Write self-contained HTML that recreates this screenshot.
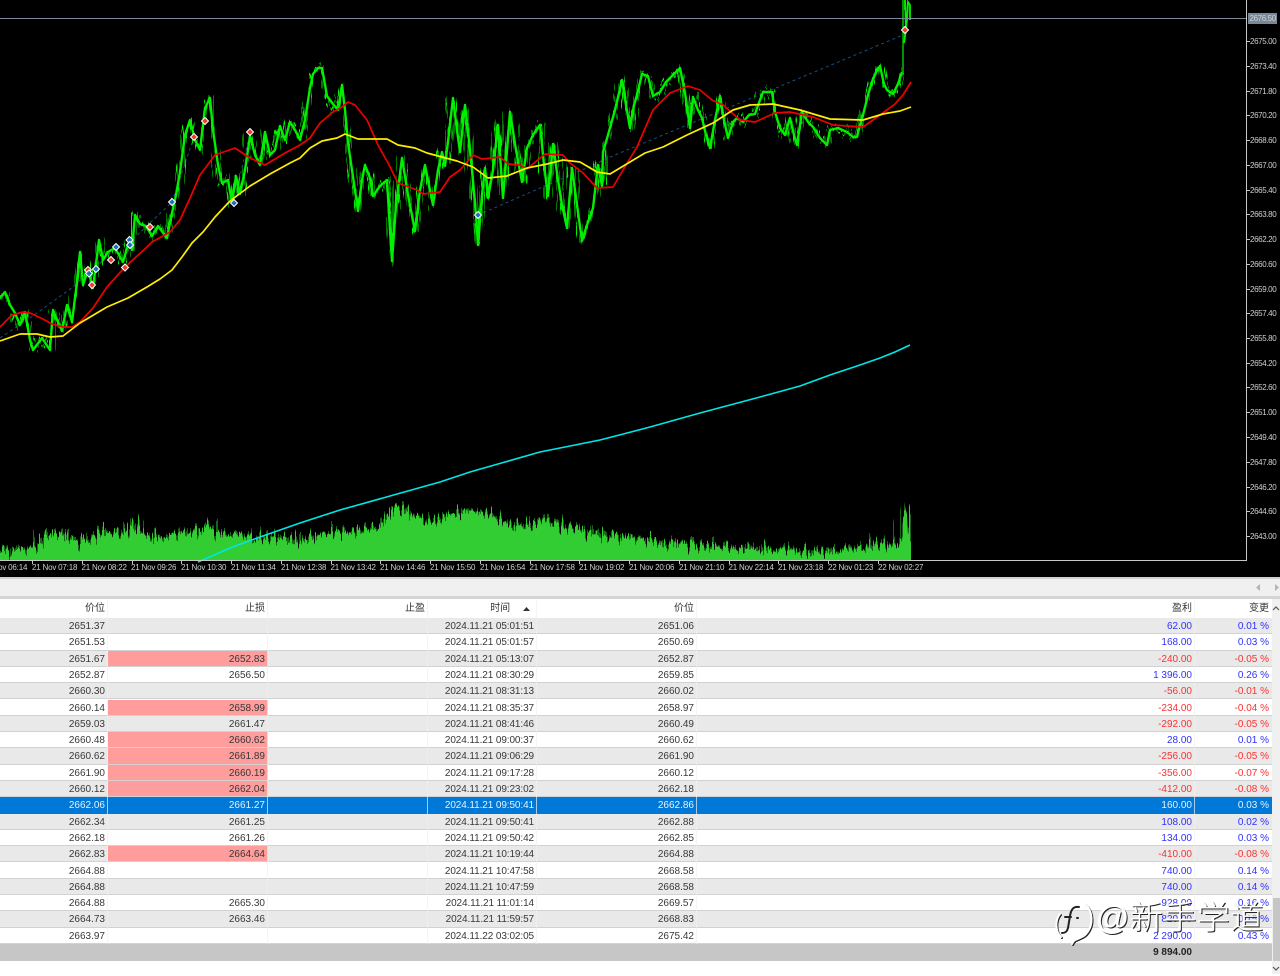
<!DOCTYPE html>
<html lang="zh">
<head>
<meta charset="utf-8">
<title>Chart</title>
<style>
html,body{margin:0;padding:0;background:#fff}
body{width:1280px;height:974px;position:relative;overflow:hidden;font-family:"Liberation Sans","Noto Sans CJK SC",sans-serif}
#chart{position:absolute;left:0;top:0;display:block}
#chart text{font-family:"Liberation Sans",sans-serif;font-size:8px;fill:#cfcfcf;letter-spacing:-.2px}
#chart .y{letter-spacing:-.38px}
#bar{position:absolute;left:0;top:577px;width:1280px;height:22px;box-sizing:border-box;background:#f0f0f0;border-top:2px solid #cfcfcf;border-bottom:3px solid #d4d4d4}
#head{position:absolute;left:0;top:599px;width:1272px;height:19px;background:#fff}
.r{position:absolute;left:0;width:1272px;height:16.3px;display:grid;grid-template-columns:108px 160px 160px 109px 160px 498px 77px;grid-template-rows:15.3px;font-size:10px;line-height:18px;color:#383838;box-sizing:border-box;border-bottom:1px solid #d2d2d2;background:#fff;white-space:pre}
.r i{font-style:normal;text-align:right;padding-right:3px;display:block;overflow:hidden}
.r i:nth-child(4){letter-spacing:-.1px}
.g{background:#e9e9e9}
.s{background:#0078d7;color:#e8f2fb;border-bottom-color:#0078d7}
.s i.b,.s i.n{color:#e8f2fb}
.p{background:#ff9c9c}
.b{color:#3030ff}
.n{color:#ff3030}
#head .r{top:0;background:#fff;border:0;line-height:20px;font-size:10px;color:#333;grid-template-rows:19px}
.v{position:absolute;top:599px;height:345px;width:1px;background:rgba(240,240,240,.7)}
#tot{position:absolute;left:0;top:944px;width:1272px;height:17px;background:#c6c6c6;font-size:10px;line-height:17px;font-weight:bold;color:#222;text-align:right;box-sizing:border-box;padding-right:80px}
#sb{position:absolute;left:1272px;top:599px;width:8px;height:375px;background:#f0f0f0}
#th{position:absolute;left:1px;top:299px;width:7px;height:63px;background:#c6c6c6}
#wm{position:absolute;left:1096px;top:896px;font-size:33px;line-height:44px;color:#fff;white-space:nowrap;font-weight:300;text-shadow:1px 1px 0 #222,-1px 0 1px rgba(255,255,255,.8);letter-spacing:.5px;font-family:"Liberation Sans","Noto Sans CJK SC",sans-serif}
#fi{position:absolute;left:1052px;top:900px}
</style>
</head>
<body>
<svg id="chart" width="1280" height="577" viewBox="0 0 1280 577">
<defs>
<filter id="jit" filterUnits="userSpaceOnUse" x="-10" y="-30" width="1000" height="640" color-interpolation-filters="sRGB">
<feTurbulence type="fractalNoise" baseFrequency="0.5 0.004" numOctaves="2" seed="7" result="t"/>
<feDisplacementMap in="SourceGraphic" in2="t" scale="22" xChannelSelector="A" yChannelSelector="G"/>
</filter>
<filter id="vjit" filterUnits="userSpaceOnUse" x="-10" y="480" width="1000" height="100" color-interpolation-filters="sRGB">
<feTurbulence type="fractalNoise" baseFrequency="0.42 0.002" numOctaves="3" seed="3" result="t"/>
<feDisplacementMap in="SourceGraphic" in2="t" scale="36" xChannelSelector="A" yChannelSelector="G"/>
</filter>
<clipPath id="cv"><rect x="0" y="480" width="911" height="80"/></clipPath>
<clipPath id="cp"><rect x="0" y="0" width="911" height="560"/></clipPath>
</defs>
<rect width="1280" height="577" fill="#000"/>

<!-- volume -->
<g clip-path="url(#cv)">
<polygon filter="url(#vjit)" fill="#32cd32" points="-5,590 -5,552 10,550 25,549 40,544 42,532 50,535 60,530 70,538 85,542 100,530 115,532 125,533 133,518 140,532 160,538 180,534 200,530 207,522 215,532 240,534 260,538 280,536 300,540 320,534 340,532 360,530 380,528 388,515 393,505 400,508 410,512 420,518 432,522 445,516 465,510 480,512 495,516 510,524 525,526 545,518 560,526 580,528 600,534 620,536 640,538 660,542 680,542 700,545 720,545 740,547 760,548 780,550 800,552 820,551 840,549 860,547 880,543 895,544 901,540 904,510 906,510 909,530 911,544 911,590"/>
<polygon fill="#32cd32" points="901,560 903,535 905,507 907,514 908,535 911,542 911,560"/>
</g>

<!-- cyan -->
<polyline fill="none" stroke="#00e6e6" stroke-width="1.600" points="198,562 230,548 260,537 300,523 340,510 390,496 440,482 470,472 505,462 540,452 570,446 600,440 650,427 700,413 760,397 800,386 830,375 860,365 880,358 895,352 910,345"/>

<!-- dotted trade links -->
<g fill="none" stroke="#1b4f80" stroke-width="1" stroke-dasharray="3 3">
<polyline points="0,338 30,318 73,287 88,272"/>
<polyline points="96,268 116,247 130,242 172,202 194,137"/>
<polyline points="234,203 250,133"/>
<polyline points="478,215 598,163 603,160 843,60 903,35"/>
</g>

<!-- price -->
<g clip-path="url(#cp)">
<polyline fill="none" stroke="#00f000" stroke-width="2.400" stroke-linejoin="round" points="-2,300 5,292 10,305 15,313 20,325 25,312 30,340 33,350 42,338 50,350 53,310 58,322 62,331 67,305 72,322 76,290 80,252 83,285 88,270 93,288 99,240 103,260 108,252 115,248 123,262 130,238 132,250 135,215 140,224 146,226 152,236 158,226 167,238 170,222 176,195 180,172 185,135 190,120 195,140 200,150 205,108 210,98 213,130 218,165 222,183 228,180 232,203 236,176 240,194 245,170 250,136 255,155 260,165 265,132 270,155 275,150 280,126 285,140 290,122 295,130 300,140 305,120 310,88 313,74 318,68 322,68 327,96 333,104 338,110 342,85 345,110 348,143 352,170 358,211 362,180 365,165 370,178 373,196 380,186 387,180 390,230 392,261 396,205 402,158 408,195 415,231 420,190 425,165 430,190 433,205 438,170 442,152 445,166 450,125 453,98 457,130 460,152 465,105 469,140 472,170 476,215 478,245 482,195 485,168 488,198 493,170 498,125 503,198 507,150 510,112 516,150 522,182 527,148 533,135 540,125 544,165 548,196 553,144 558,180 562,205 567,228 572,168 577,205 582,241 587,225 593,208 598,165 602,186 603,152 608,135 615,110 622,80 626,105 630,128 634,105 637,95 642,74 648,76 653,96 660,92 666,82 672,76 680,68 685,93 690,128 693,97 698,110 702,118 706,135 710,148 715,120 720,96 724,120 728,138 733,122 737,118 743,122 749,115 755,114 760,100 763,92 772,92 775,112 780,128 785,135 790,118 794,135 797,145 802,112 808,122 813,127 820,138 827,145 830,130 838,128 847,132 853,137 857,137 860,125 863,115 868,95 872,82 876,72 880,66 884,84 887,90 893,94 898,84 902,72"/>
<polyline filter="url(#jit)" fill="none" stroke="#00f000" stroke-width="1.500" stroke-linejoin="round" points="-2,300 5,292 10,305 15,313 20,325 25,312 30,340 33,350 42,338 50,350 53,310 58,322 62,331 67,305 72,322 76,290 80,252 83,285 88,270 93,288 99,240 103,260 108,252 115,248 123,262 130,238 132,250 135,215 140,224 146,226 152,236 158,226 167,238 170,222 176,195 180,172 185,135 190,120 195,140 200,150 205,108 210,98 213,130 218,165 222,183 228,180 232,203 236,176 240,194 245,170 250,136 255,155 260,165 265,132 270,155 275,150 280,126 285,140 290,122 295,130 300,140 305,120 310,88 313,74 318,68 322,68 327,96 333,104 338,110 342,85 345,110 348,143 352,170 358,211 362,180 365,165 370,178 373,196 380,186 387,180 390,230 392,261 396,205 402,158 408,195 415,231 420,190 425,165 430,190 433,205 438,170 442,152 445,166 450,125 453,98 457,130 460,152 465,105 469,140 472,170 476,215 478,245 482,195 485,168 488,198 493,170 498,125 503,198 507,150 510,112 516,150 522,182 527,148 533,135 540,125 544,165 548,196 553,144 558,180 562,205 567,228 572,168 577,205 582,241 587,225 593,208 598,165 602,186 603,152 608,135 615,110 622,80 626,105 630,128 634,105 637,95 642,74 648,76 653,96 660,92 666,82 672,76 680,68 685,93 690,128 693,97 698,110 702,118 706,135 710,148 715,120 720,96 724,120 728,138 733,122 737,118 743,122 749,115 755,114 760,100 763,92 772,92 775,112 780,128 785,135 790,118 794,135 797,145 802,112 808,122 813,127 820,138 827,145 830,130 838,128 847,132 853,137 857,137 860,125 863,115 868,95 872,82 876,72 880,66 884,84 887,90 893,94 898,84 902,72"/>
</g>
<polyline fill="none" stroke="#00b800" stroke-width="1.600" points="903,75 903,0"/>
<polyline fill="none" stroke="#00f000" stroke-width="1.800" points="905,10 905,-5 906,30 904,43 907,20 908,2 910,5 910,20"/>

<!-- red MA -->
<polyline fill="none" stroke="#ee0000" stroke-width="1.700" stroke-linejoin="round" points="0,327 12,315 23,312 30,313 43,319 52,324 63,327 72,327 80,322 93,308 107,287 125,267 147,247 152,242 170,232 180,220 190,198 200,175 215,155 235,148 250,158 265,165 285,153 300,145 310,138 320,123 333,112 342,107 348,102 355,105 367,120 378,145 388,163 398,183 417,190 423,194 440,192 450,177 460,170 473,155 482,159 500,157 508,164 520,165 527,169 545,154 563,155 570,163 583,173 597,188 613,187 623,170 637,147 653,110 670,93 688,86 700,90 712,100 723,105 740,120 755,122 775,113 790,112 813,117 833,125 863,127 880,115 895,104 903,95 911,82"/>

<!-- yellow MA -->
<polyline fill="none" stroke="#ffee00" stroke-width="1.700" stroke-linejoin="round" points="0,341 20,334 37,334 50,337 63,336 80,323 107,307 128,298 147,287 160,279 172,270 182,257 192,243 203,232 215,217 230,201 250,186 270,174 290,163 300,158 310,148 322,141 337,138 345,134 358,139 387,139 398,145 415,148 427,153 457,161 473,167 488,178 507,176 527,168 547,164 563,160 580,162 597,172 610,174 625,165 645,153 663,147 687,135 713,123 733,110 750,105 773,104 800,110 830,119 863,120 883,114 900,111 911,107"/>

<!-- markers -->
<g stroke="#fff" stroke-width="1">
<g fill="#e8402a">
<path d="M92 281.500l3.500 3.500-3.500 3.500-3.500-3.500z"/>
<path d="M88 266.500l3.500 3.500-3.500 3.500-3.500-3.500z"/>
<path d="M111 256.500l3.500 3.500-3.500 3.500-3.500-3.500z"/>
<path d="M125 264l3.500 3.500-3.500 3.500-3.500-3.500z"/>
<path d="M150 223.500l3.500 3.500-3.500 3.500-3.500-3.500z"/>
<path d="M194 133.500l3.500 3.500-3.500 3.500-3.500-3.500z"/>
<path d="M205 117.500l3.500 3.500-3.500 3.500-3.500-3.500z"/>
<path d="M250 128.500l3.500 3.500-3.500 3.500-3.500-3.500z"/>
<path d="M905 26.500l3.500 3.500-3.500 3.500-3.500-3.500z"/>
</g>
<g fill="#1f6fc0">
<path d="M89 270l3.500 3.500-3.500 3.500-3.500-3.500z"/>
<path d="M96 265.500l3.500 3.500-3.500 3.500-3.500-3.500z"/>
<path d="M116 243.500l3.500 3.500-3.500 3.500-3.500-3.500z"/>
<path d="M129.500 236.500l3.500 3.500-3.500 3.500-3.500-3.500z"/>
<path d="M130 241.500l3.500 3.500-3.500 3.500-3.500-3.500z"/>
<path d="M172 198.500l3.500 3.500-3.500 3.500-3.500-3.500z"/>
<path d="M234 199.500l3.500 3.500-3.500 3.500-3.500-3.500z"/>
<path d="M478 211.500l3.500 3.500-3.500 3.500-3.500-3.500z"/>
</g>
</g>

<!-- axes -->
<line x1="0" y1="18.500" x2="1246" y2="18.500" stroke="#778899"/>
<line x1="1246.500" y1="0" x2="1246.500" y2="561" stroke="#c8c8c8"/>
<line x1="0" y1="560.500" x2="1247" y2="560.500" stroke="#c8c8c8"/>
<g stroke="#c8c8c8">
<path d="M1247 41.500h3M1247 66.500h3M1247 91.500h3M1247 115.500h3M1247 140.500h3M1247 165.500h3M1247 190.500h3M1247 214.500h3M1247 239.500h3M1247 264.500h3M1247 289.500h3M1247 313.500h3M1247 338.500h3M1247 363.500h3M1247 387.500h3M1247 412.500h3M1247 437.500h3M1247 462.500h3M1247 487.500h3M1247 511.500h3M1247 536.500h3"/>
<path d="M32.500 561v3M82.500 561v3M132.500 561v3M181.500 561v3M231.500 561v3M281.500 561v3M331.500 561v3M380.500 561v3M430.500 561v3M480.500 561v3M530.500 561v3M579.500 561v3M629.500 561v3M679.500 561v3M729.500 561v3M778.500 561v3M828.500 561v3M878.500 561v3"/>
</g>
<rect x="1248" y="13" width="29" height="11" fill="#778899"/>
<g class="y">
<text class="y" x="1249.500" y="21">2676.50</text>
<text class="y" x="1250" y="44">2675.00</text>
<text class="y" x="1250" y="69">2673.40</text>
<text class="y" x="1250" y="94">2671.80</text>
<text class="y" x="1250" y="118">2670.20</text>
<text class="y" x="1250" y="143">2668.60</text>
<text class="y" x="1250" y="168">2667.00</text>
<text class="y" x="1250" y="193">2665.40</text>
<text class="y" x="1250" y="217">2663.80</text>
<text class="y" x="1250" y="242">2662.20</text>
<text class="y" x="1250" y="267">2660.60</text>
<text class="y" x="1250" y="292">2659.00</text>
<text class="y" x="1250" y="316">2657.40</text>
<text class="y" x="1250" y="341">2655.80</text>
<text class="y" x="1250" y="366">2654.20</text>
<text class="y" x="1250" y="390">2652.60</text>
<text class="y" x="1250" y="415">2651.00</text>
<text class="y" x="1250" y="440">2649.40</text>
<text class="y" x="1250" y="465">2647.80</text>
<text class="y" x="1250" y="490">2646.20</text>
<text class="y" x="1250" y="514">2644.60</text>
<text class="y" x="1250" y="539">2643.00</text>
</g>
<text x="-18" y="570">21 Nov 06:14</text>
<text x="32" y="570">21 Nov 07:18</text>
<text x="81.500" y="570">21 Nov 08:22</text>
<text x="131" y="570">21 Nov 09:26</text>
<text x="181" y="570">21 Nov 10:30</text>
<text x="231" y="570">21 Nov 11:34</text>
<text x="281" y="570">21 Nov 12:38</text>
<text x="330.500" y="570">21 Nov 13:42</text>
<text x="380" y="570">21 Nov 14:46</text>
<text x="430" y="570">21 Nov 15:50</text>
<text x="480" y="570">21 Nov 16:54</text>
<text x="529.500" y="570">21 Nov 17:58</text>
<text x="579" y="570">21 Nov 19:02</text>
<text x="629" y="570">21 Nov 20:06</text>
<text x="679" y="570">21 Nov 21:10</text>
<text x="728.500" y="570">21 Nov 22:14</text>
<text x="778" y="570">21 Nov 23:18</text>
<text x="828" y="570">22 Nov 01:23</text>
<text x="878" y="570">22 Nov 02:27</text>
</svg>

<div id="bar">
<svg width="1280" height="17" style="display:block"><path d="M1260 5l-4 3.500 4 3.500z" fill="#b4b4b4"/><path d="M1275 5l4 3.500-4 3.500z" fill="#b4b4b4"/></svg>
</div>

<div id="head"><div class="r"><i>价位</i><i>止损</i><i>止盈</i><i style="position:relative;padding-right:27px">时间<svg style="position:absolute;right:7px;top:8px" width="7" height="4"><path d="M0 4l3.500-4 3.500 4z" fill="#333"/></svg></i><i>价位</i><i>盈利</i><i>变更</i></div></div>

<div class="r g" style="top:618px"><i>2651.37</i><i></i><i></i><i>2024.11.21 05:01:51</i><i>2651.06</i><i class="b">62.00</i><i class="b">0.01 %</i></div>
<div class="r" style="top:634.300px"><i>2651.53</i><i></i><i></i><i>2024.11.21 05:01:57</i><i>2650.69</i><i class="b">168.00</i><i class="b">0.03 %</i></div>
<div class="r g" style="top:650.600px"><i>2651.67</i><i class="p">2652.83</i><i></i><i>2024.11.21 05:13:07</i><i>2652.87</i><i class="n">-240.00</i><i class="n">-0.05 %</i></div>
<div class="r" style="top:666.900px"><i>2652.87</i><i>2656.50</i><i></i><i>2024.11.21 08:30:29</i><i>2659.85</i><i class="b">1 396.00</i><i class="b">0.26 %</i></div>
<div class="r g" style="top:683.200px"><i>2660.30</i><i></i><i></i><i>2024.11.21 08:31:13</i><i>2660.02</i><i class="n">-56.00</i><i class="n">-0.01 %</i></div>
<div class="r" style="top:699.500px"><i>2660.14</i><i class="p">2658.99</i><i></i><i>2024.11.21 08:35:37</i><i>2658.97</i><i class="n">-234.00</i><i class="n">-0.04 %</i></div>
<div class="r g" style="top:715.800px"><i>2659.03</i><i>2661.47</i><i></i><i>2024.11.21 08:41:46</i><i>2660.49</i><i class="n">-292.00</i><i class="n">-0.05 %</i></div>
<div class="r" style="top:732.100px"><i>2660.48</i><i class="p">2660.62</i><i></i><i>2024.11.21 09:00:37</i><i>2660.62</i><i class="b">28.00</i><i class="b">0.01 %</i></div>
<div class="r g" style="top:748.400px"><i>2660.62</i><i class="p">2661.89</i><i></i><i>2024.11.21 09:06:29</i><i>2661.90</i><i class="n">-256.00</i><i class="n">-0.05 %</i></div>
<div class="r" style="top:764.700px"><i>2661.90</i><i class="p">2660.19</i><i></i><i>2024.11.21 09:17:28</i><i>2660.12</i><i class="n">-356.00</i><i class="n">-0.07 %</i></div>
<div class="r g" style="top:781px"><i>2660.12</i><i class="p">2662.04</i><i></i><i>2024.11.21 09:23:02</i><i>2662.18</i><i class="n">-412.00</i><i class="n">-0.08 %</i></div>
<div class="r s" style="top:797.300px"><i>2662.06</i><i>2661.27</i><i></i><i>2024.11.21 09:50:41</i><i>2662.86</i><i class="b">160.00</i><i class="b">0.03 %</i></div>
<div class="r g" style="top:813.600px"><i>2662.34</i><i>2661.25</i><i></i><i>2024.11.21 09:50:41</i><i>2662.88</i><i class="b">108.00</i><i class="b">0.02 %</i></div>
<div class="r" style="top:829.900px"><i>2662.18</i><i>2661.26</i><i></i><i>2024.11.21 09:50:42</i><i>2662.85</i><i class="b">134.00</i><i class="b">0.03 %</i></div>
<div class="r g" style="top:846.200px"><i>2662.83</i><i class="p">2664.64</i><i></i><i>2024.11.21 10:19:44</i><i>2664.88</i><i class="n">-410.00</i><i class="n">-0.08 %</i></div>
<div class="r" style="top:862.500px"><i>2664.88</i><i></i><i></i><i>2024.11.21 10:47:58</i><i>2668.58</i><i class="b">740.00</i><i class="b">0.14 %</i></div>
<div class="r g" style="top:878.800px"><i>2664.88</i><i></i><i></i><i>2024.11.21 10:47:59</i><i>2668.58</i><i class="b">740.00</i><i class="b">0.14 %</i></div>
<div class="r" style="top:895.100px"><i>2664.88</i><i>2665.30</i><i></i><i>2024.11.21 11:01:14</i><i>2669.57</i><i class="b">928.00</i><i class="b">0.16 %</i></div>
<div class="r g" style="top:911.400px"><i>2664.73</i><i>2663.46</i><i></i><i>2024.11.21 11:59:57</i><i>2668.83</i><i class="b">820.00</i><i class="b">0.15 %</i></div>
<div class="r" style="top:927.700px"><i>2663.97</i><i></i><i></i><i>2024.11.22 03:02:05</i><i>2675.42</i><i class="b">2 290.00</i><i class="b">0.43 %</i></div>

<div class="v" style="left:107px"></div>
<div class="v" style="left:267px"></div>
<div class="v" style="left:427px"></div>
<div class="v" style="left:536px"></div>
<div class="v" style="left:696px"></div>
<div class="v" style="left:1194px"></div>

<div id="tot">9 894.00</div>

<div id="sb">
<svg width="8" height="14" style="position:absolute;left:0;top:4px"><path d="M1 7l3-3 3 3" fill="none" stroke="#555" stroke-width="1.200"/></svg>
<div id="th"></div>
<svg width="8" height="14" style="position:absolute;left:0;top:363px"><path d="M1 5l3 3 3-3" fill="none" stroke="#555" stroke-width="1.200"/></svg>
</div>

<svg id="fi" width="44" height="48" viewBox="0 0 44 48">
<g fill="none" stroke-linecap="round">
<path d="M8 14c-5 6-5 17 1 23M33 4c8 7 9 21 1 30-4 5-12 4-14 10" stroke="#222" stroke-width="2" transform="translate(1 1)"/>
<path d="M8 14c-5 6-5 17 1 23M33 4c8 7 9 21 1 30-4 5-12 4-14 10" stroke="#fff" stroke-width="2"/>
<path d="M27 7c-6-1-8 3-9 9l-2 12c-1 4-3 5-6 5M13 17h6M25 18h1" stroke="#222" stroke-width="2"/>
</g>
</svg>
<div id="wm">@新手学道</div>
</body>
</html>
